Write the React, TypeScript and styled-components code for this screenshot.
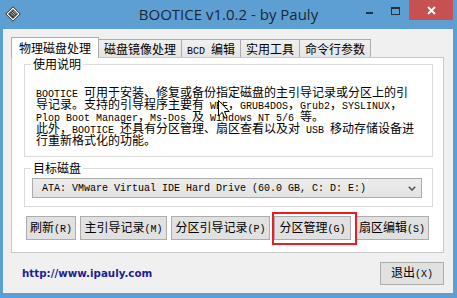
import React from 'react';
import styled, { createGlobalStyle, css } from 'styled-components';

const GlobalStyle = createGlobalStyle`
  html, body {
    margin: 0;
    padding: 0;
    background: #5e9fd3;
  }
  body {
    font-family: "Noto Sans CJK SC", "Noto Sans", sans-serif;
  }
`;

const Window = styled.div`
  position: relative;
  width: 457px;
  height: 298px;
  background: #5e9fd3;
  display: flex;
  flex-direction: column;
  overflow: hidden;
`;

const TitleBar = styled.div`
  height: 29px;
  flex: none;
  display: grid;
  grid-template-columns: 1fr auto 1fr;
  align-items: start;
`;

const AppIcon = styled.div`
  padding: 6px 0 0 5px;
  display: flex;
`;

const Title = styled.div`
  font-family: "Open Sans", "Noto Sans", sans-serif;
  font-size: 15px;
  line-height: 28px;
  color: #1b2633;
  white-space: nowrap;
`;

const Controls = styled.div`
  justify-self: end;
  display: flex;
  padding-right: 4px;
`;

const CaptionButton = styled.div<{ $w: number; $close?: boolean }>`
  width: ${p => p.$w}px;
  height: 20px;
  display: flex;
  align-items: center;
  justify-content: center;
  background: ${p => (p.$close ? '#c75050' : 'transparent')};
`;

const MinGlyph = styled.div`
  width: 7px;
  height: 2px;
  margin-top: 5px;
  background: #23303d;
`;

const MaxGlyph = styled.div`
  width: 9px;
  height: 8px;
  box-sizing: border-box;
  margin-top: 1px;
  border: 1px solid #23303d;
  border-top-width: 2px;
`;

const Client = styled.div`
  flex: 1;
  margin: 0 4px 5px 3px;
  background: #f0f0f0;
  display: flex;
  flex-direction: column;
  padding: 8px 9px 0 8px;
`;

const TabStrip = styled.div`
  height: 20px;
  display: flex;
  align-items: flex-end;
  padding-left: 2px;
`;

// selected tab is inflated 2px to the left and top, and covers the panel's top border
const Tab = styled.div<{ $active?: boolean }>`
  position: relative;
  box-sizing: border-box;
  height: 18px;
  padding: 0 5px;
  margin-left: -1px;
  border: 1px solid #acacac;
  border-bottom: none;
  background: linear-gradient(#f0f0f0, #e5e5e5);
  font-size: 12px;
  line-height: 17px;
  color: #000;
  white-space: pre;

  &:first-child {
    margin-left: 0;
  }

  ${p =>
    p.$active &&
    css`
      z-index: 2;
      height: 21px;
      padding: 0 7px;
      margin-bottom: -1px;
      background: #fff;
      line-height: 19px;
      &:first-child {
        margin-left: -2px;
      }
    `}
`;

const Panel = styled.div`
  border: 1px solid #c9c9c9;
  background: #fff;
  padding: 0 10px 12px 12px;
  display: flex;
  flex-direction: column;
`;

const GroupBox = styled.fieldset<{ $pad: string; $gap?: number }>`
  margin: ${p => p.$gap || 0}px 0 0;
  padding: ${p => p.$pad};
  min-width: 0;
  border: 1px solid #dcdcdc;
`;

const Legend = styled.legend<{ $shift: number }>`
  margin-left: ${p => p.$shift}px;
  padding: 0 2px;
  font-size: 12px;
  line-height: 12px;
  color: #000;
`;

const TextLine = styled.div`
  height: 12px;
  font-size: 12px;
  line-height: 12px;
  white-space: pre;
  color: #000;
`;

const Latin = styled.span`
  font-family: "Liberation Mono", monospace;
  font-size: 10px;
`;

const ComboBox = styled.div`
  box-sizing: border-box;
  height: 20px;
  display: flex;
  align-items: center;
  justify-content: space-between;
  padding: 0 5px 0 9px;
  border: 1px solid #acacac;
  background: linear-gradient(#ececec, #e3e3e3);
  font-size: 12px;
  white-space: pre;
  color: #000;
`;

const ButtonRow = styled.div`
  display: flex;
  gap: 4px;
  margin: 9px 0 0 2px;
`;

const PushButton = styled.button<{ $w: number; $h?: number; $marked?: boolean }>`
  width: ${p => p.$w}px;
  height: ${p => p.$h || 24}px;
  padding: 0;
  border: 1px solid #adadad;
  background: #e1e1e1;
  font-family: "Noto Sans CJK SC", sans-serif;
  font-size: 12px;
  line-height: 12px;
  color: #000;
  white-space: pre;

  ${p =>
    p.$marked &&
    css`
      position: relative;
      z-index: 1;
      &::after {
        content: '';
        position: absolute;
        left: -3px;
        top: -5px;
        right: -7px;
        bottom: -6px;
        border: 2px solid #ea1c24;
        pointer-events: none;
      }
    `}
`;

const Footer = styled.div`
  flex: 1;
  display: flex;
  align-items: center;
  justify-content: space-between;
  padding: 0 0 0 11px;
`;

const Link = styled.span`
  font-family: "DejaVu Sans", sans-serif;
  font-weight: bold;
  font-size: 10.3px;
  color: #1e1e96;
`;

const Cursor = styled.svg`
  position: absolute;
  left: 218px;
  top: 100px;
`;

const mixed = (text: string) =>
  text
    .split(/([\x20-\x7e]+)/)
    .filter(Boolean)
    .map((part, i) =>
      /^[\x20-\x7e]+$/.test(part) ? <Latin key={i}>{part}</Latin> : <span key={i}>{part}</span>
    );

const tabs = ['物理磁盘处理', '磁盘镜像处理', 'BCD 编辑', '实用工具', '命令行参数'];

const usage = [
  'BOOTICE 可用于安装、修复或备份指定磁盘的主引导记录或分区上的引',
  '导记录。支持的引导程序主要有 WEE，GRUB4DOS，Grub2，SYSLINUX，',
  'Plop Boot Manager，Ms-Dos 及 Windows NT 5/6 等。',
  '此外，BOOTICE 还具有分区管理、扇区查看以及对 USB 移动存储设备进',
  '行重新格式化的功能。',
];

const actions = [
  { label: '刷新(R)', w: 50 },
  { label: '主引导记录(M)', w: 87 },
  { label: '分区引导记录(P)', w: 99 },
  { label: '分区管理(G)', w: 77, marked: true },
  { label: '扇区编辑(S)', w: 74 },
];

const DiskIcon = () => (
  <svg width="16" height="16" viewBox="0 0 16 16">
    <path d="M8 0.8 L15.2 8 L8 15.2 L0.8 8 Z" fill="#fff" stroke="#2a2a2a" strokeWidth="1" />
    <path d="M8 3 L13 8 L8 13 L3 8 Z" fill="#3c3c3c" />
    <path d="M5.5 7 L9 10.5 M6.8 5.8 L10.2 9.2 M8 4.6 L11.4 8" stroke="#d8d8d8" strokeWidth="0.8" />
  </svg>
);

const App = () => (
  <>
    <GlobalStyle />
    <Window>
      <TitleBar>
        <AppIcon>
          <DiskIcon />
        </AppIcon>
        <Title>BOOTICE v1.0.2 - by Pauly</Title>
        <Controls>
          <CaptionButton $w={26}>
            <MinGlyph />
          </CaptionButton>
          <CaptionButton $w={27}>
            <MaxGlyph />
          </CaptionButton>
          <CaptionButton $w={44} $close>
            <svg width="9" height="9" viewBox="0 0 9 9">
              <path d="M1 1 L8 8 M8 1 L1 8" stroke="#fff" strokeWidth="1.8" />
            </svg>
          </CaptionButton>
        </Controls>
      </TitleBar>

      <Client>
        <TabStrip>
          {tabs.map((t, i) => (
            <Tab key={t} $active={i === 0}>
              {mixed(t)}
            </Tab>
          ))}
        </TabStrip>
        <Panel>
          <GroupBox $pad="16px 10px 10px 11px">
            <Legend $shift={-5}>使用说明</Legend>
            {usage.map((line, i) => (
              <TextLine key={i}>{mixed(line)}</TextLine>
            ))}
          </GroupBox>
          <GroupBox $pad="4px 10px 8px 7px" $gap={5}>
            <Legend $shift={-1}>目标磁盘</Legend>
            <ComboBox>
              <Latin>ATA: VMware Virtual IDE Hard Drive (60.0 GB, C: D: E:)</Latin>
              <svg width="8" height="5" viewBox="0 0 8 5">
                <path d="M0.8 0.8 L4 4 L7.2 0.8" fill="none" stroke="#555" strokeWidth="1.6" />
              </svg>
            </ComboBox>
          </GroupBox>
          <ButtonRow>
            {actions.map(a => (
              <PushButton key={a.label} $w={a.w} $marked={a.marked}>
                {mixed(a.label)}
              </PushButton>
            ))}
          </ButtonRow>
        </Panel>
        <Footer>
          <Link>http://www.ipauly.com</Link>
          <PushButton $w={64} $h={23}>
            {mixed('退出(X)')}
          </PushButton>
        </Footer>
      </Client>

      <Cursor width="12" height="19" viewBox="0 0 12 19">
        <path d="M0.5 0.5 L0.5 16 L4.2 12.4 L6.8 18.2 L9 17.2 L6.5 11.5 L11.2 11.5 Z" fill="#fff" stroke="#000" strokeWidth="1" />
      </Cursor>
    </Window>
  </>
);

export default App;
